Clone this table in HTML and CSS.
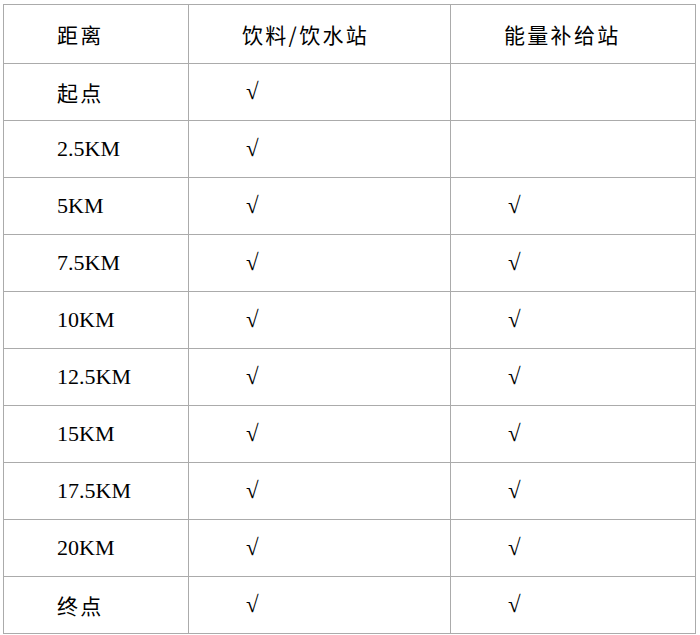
FILE: index.html
```html
<!DOCTYPE html>
<html lang="zh">
<head>
<meta charset="utf-8">
<link rel="stylesheet" href="styles.css">
</head>
<body>
<div class="wrap">
<table class="supply">
  <colgroup><col class="c1"><col class="c2"><col class="c3"></colgroup>
  <thead>
    <tr class="head"><th>距离</th><th>饮料/饮水站</th><th>能量补给站</th></tr>
  </thead>
  <tbody>
    <tr><td>起点</td><td class="ck">√</td><td class="ck"></td></tr>
    <tr><td class="lat">2.5KM</td><td class="ck">√</td><td class="ck"></td></tr>
    <tr><td class="lat">5KM</td><td class="ck">√</td><td class="ck">√</td></tr>
    <tr><td class="lat">7.5KM</td><td class="ck">√</td><td class="ck">√</td></tr>
    <tr><td class="lat">10KM</td><td class="ck">√</td><td class="ck">√</td></tr>
    <tr><td class="lat">12.5KM</td><td class="ck">√</td><td class="ck">√</td></tr>
    <tr><td class="lat">15KM</td><td class="ck">√</td><td class="ck">√</td></tr>
    <tr><td class="lat">17.5KM</td><td class="ck">√</td><td class="ck">√</td></tr>
    <tr><td class="lat">20KM</td><td class="ck">√</td><td class="ck">√</td></tr>
    <tr><td>终点</td><td class="ck">√</td><td class="ck">√</td></tr>
  </tbody>
</table>
</div>
</body>
</html>
```
FILE: styles.css
```css
html, body {
  margin: 0;
  padding: 0;
  background: #ffffff;
}
.wrap {
  padding: 4px 0 0 3px;
}
.supply {
  border-collapse: collapse;
  table-layout: fixed;
  width: 692px;
  font-family: "Noto Sans CJK SC", sans-serif;
  font-size: 21px;
  color: #000000;
}
.c1 { width: 185px; }
.c2 { width: 262px; }
.c3 { width: 245px; }
.supply th,
.supply td {
  border: 1px solid #ababab;
  padding: 0 0 0 53px;
  text-align: left;
  font-weight: normal;
  vertical-align: middle;
  letter-spacing: 2.3px;
  white-space: nowrap;
  line-height: 24px;
}
.supply tr { height: 57px; }
.supply tr.head { height: 59px; }
.supply td.lat {
  font-family: "Liberation Serif", serif;
  font-size: 22px;
  letter-spacing: 0;
}
.supply td.ck {
  font-family: "Liberation Serif", serif;
  font-size: 23px;
  letter-spacing: 0;
  padding-left: 57px;
}
```
